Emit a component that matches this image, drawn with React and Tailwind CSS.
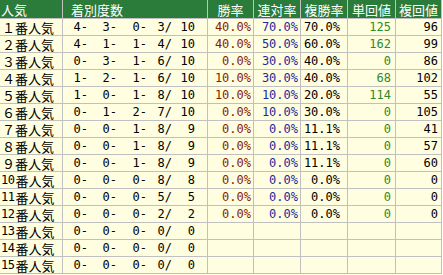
import React from 'react';

const ROWS = [
  ['１', [4, 3, 0, 3, 10], '40.0%', '70.0%', '70.0%', '125', '96'],
  ['２', [4, 1, 1, 4, 10], '40.0%', '50.0%', '60.0%', '162', '99'],
  ['３', [0, 3, 1, 6, 10], '0.0%', '30.0%', '40.0%', '0', '86'],
  ['４', [1, 2, 1, 6, 10], '10.0%', '30.0%', '40.0%', '68', '102'],
  ['５', [1, 0, 1, 8, 10], '10.0%', '10.0%', '20.0%', '114', '55'],
  ['６', [0, 1, 2, 7, 10], '0.0%', '10.0%', '30.0%', '0', '105'],
  ['７', [0, 0, 1, 8, 9], '0.0%', '0.0%', '11.1%', '0', '41'],
  ['８', [0, 0, 1, 8, 9], '0.0%', '0.0%', '11.1%', '0', '57'],
  ['９', [0, 0, 1, 8, 9], '0.0%', '0.0%', '11.1%', '0', '60'],
  ['10', [0, 0, 0, 8, 8], '0.0%', '0.0%', '0.0%', '0', '0'],
  ['11', [0, 0, 0, 5, 5], '0.0%', '0.0%', '0.0%', '0', '0'],
  ['12', [0, 0, 0, 2, 2], '0.0%', '0.0%', '0.0%', '0', '0'],
  ['13', [0, 0, 0, 0, 0]],
  ['14', [0, 0, 0, 0, 0]],
  ['15', [0, 0, 0, 0, 0]],
];

const JP = "font-['Noto_Sans_CJK_JP',sans-serif] text-[13px] leading-[15px]";
const NUM = "font-['DejaVu_Sans_Mono','Liberation_Mono',monospace] text-[12px] leading-[15px]";
const CELL = 'flex items-center border-r border-b border-[#c0c0c0] h-[17px]';
const HEAD = 'flex items-center border-r border-b border-[#c0c0c0] h-[19px] text-white bg-[#2b7b3b]';

function Label({ n }) {
  const half = /^[0-9]/.test(n);
  if (!half) {
    return (
      <div className={`${CELL} pl-[2px]`}>
        <span className={JP}>{n}番人気</span>
      </div>
    );
  }
  return (
    <div className={`${CELL} pl-[1px]`}>
      <span className={`${NUM} tracking-[-0.5px] mr-[1px]`}>{n}</span>
      <span className={JP}>番人気</span>
    </div>
  );
}

function Counts({ v }) {
  const slots = [
    [`${v[0]}-`, 'w-[25px]'],
    [`${v[1]}-`, 'w-[29px]'],
    [`${v[2]}-`, 'w-[30px]'],
    [`${v[3]}/`, 'w-[25px]'],
    [`${v[4]}`, 'w-[23px]'],
  ];
  return (
    <div className={CELL}>
      {slots.map(([t, w], i) => (
        <span key={i} className={`${NUM} ${w} text-right`}>{t}</span>
      ))}
    </div>
  );
}

export default function App() {
  return (
    <div className="w-[443px] h-[275px] bg-white overflow-hidden">
      <div className="w-[442px] h-[275px] bg-[#fffee0] grid grid-cols-[63px_145px_46px_47px_47px_48px_46px] content-start text-black">
        <div className={`${HEAD} pl-[1px]`}><span className={JP}>人気</span></div>
        <div className={`${HEAD} pl-[8px]`}><span className={JP}>着別度数</span></div>
        <div className={`${HEAD} justify-center`}><span className={JP}>勝率</span></div>
        <div className={`${HEAD} justify-center`}><span className={JP}>連対率</span></div>
        <div className={`${HEAD} justify-center`}><span className={JP}>複勝率</span></div>
        <div className={`${HEAD} justify-center`}><span className={JP}>単回値</span></div>
        <div className={`${HEAD} justify-center`}><span className={JP}>複回値</span></div>

        {ROWS.map((r, i) => (
          <React.Fragment key={i}>
            <Label n={r[0]} />
            <Counts v={r[1]} />
            <div className={`${CELL} justify-end pr-[2px] text-[#8a1c00]`}><span className={NUM}>{r[2]}</span></div>
            <div className={`${CELL} justify-end pr-[2px] text-[#1c2a9c]`}><span className={NUM}>{r[3]}</span></div>
            <div className={`${CELL} justify-end pr-[7px]`}><span className={NUM}>{r[4]}</span></div>
            <div className={`${CELL} justify-end pr-[4px] text-[#2e8a2a]`}><span className={NUM}>{r[5]}</span></div>
            <div className={`${CELL} justify-end pr-[3px]`}><span className={NUM}>{r[6]}</span></div>
          </React.Fragment>
        ))}
      </div>
    </div>
  );
}
